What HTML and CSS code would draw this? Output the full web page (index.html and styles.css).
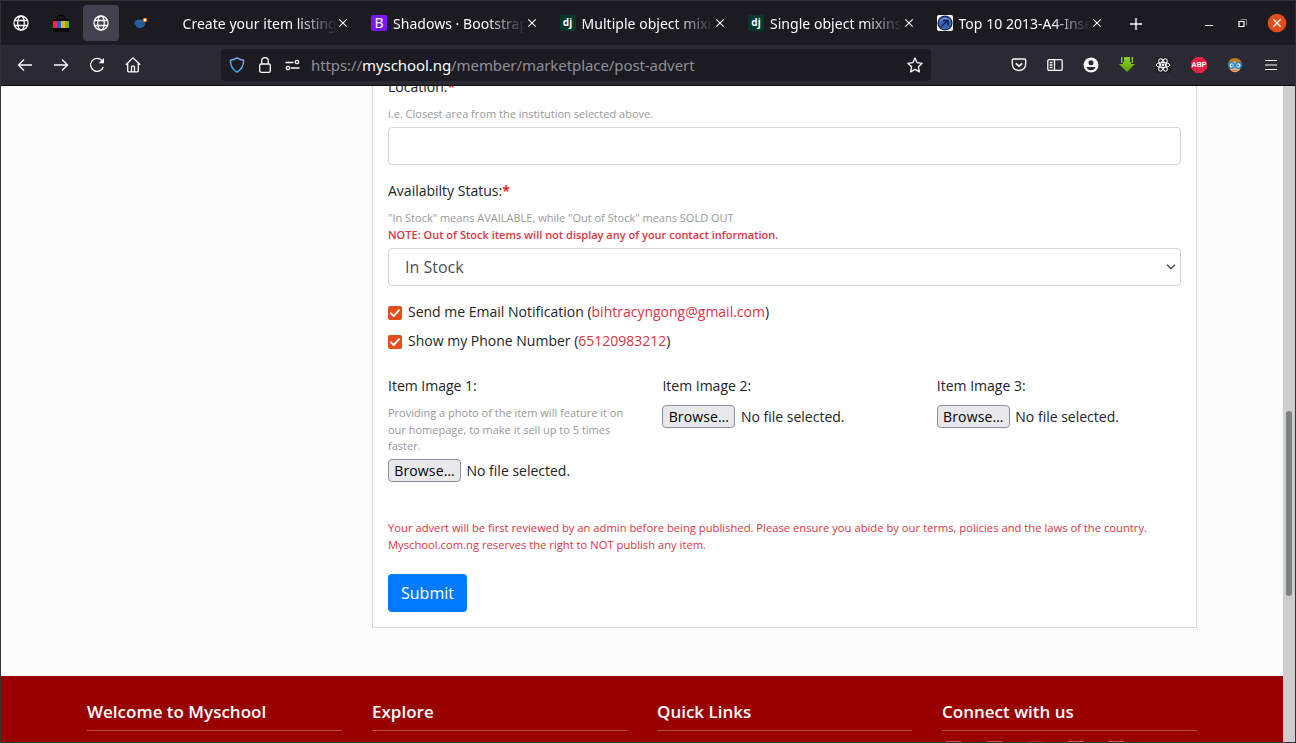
FILE: index.html
```html
<!DOCTYPE html>
<html lang="en">
<head>
<meta charset="utf-8">
<title>Create your item listing</title>
<link rel="stylesheet" href="styles.css">
</head>
<body>
<svg class="defs" width="0" height="0">
  <defs>
    <symbol id="globe" viewBox="0 0 16 16"><g fill="none" stroke="#fbfbfe" stroke-width="1.3"><circle cx="8" cy="8" r="7"/><ellipse cx="8" cy="8" rx="3.3" ry="7"/><path d="M1.5 5.5h13M1.5 10.5h13"/></g></symbol>
    <symbol id="close" viewBox="0 0 10 10"><path d="M1.3 1.3l7.4 7.4M8.7 1.3L1.3 8.7" fill="none" stroke="#fbfbfe" stroke-width="1.1"/></symbol>
    <symbol id="check" viewBox="0 0 14 14"><path d="M3 7.3l2.7 2.8L11 4.2" fill="none" stroke="#fff" stroke-width="1.9" stroke-linecap="round" stroke-linejoin="round"/></symbol>
  </defs>
</svg>
<div class="window">
  <header class="tabbar">
    <div class="pinned"><svg width="16" height="16"><use href="#globe"/></svg></div>
    <div class="pinned"><svg width="16" height="18" viewBox="0 0 16 18"><path d="M4.5 6V4.5Q4.5 1.5 8 1.5t3.500 3V6" fill="none" stroke="#000" stroke-width="1.3"/><path d="M0 5h16v13H0z"/><path d="M0 7h4v7H0z" fill="#ff2342"/><path d="M4 7h4v7H4z" fill="#0968d8"/><path d="M8 7h4v7H8z" fill="#ffae00"/><path d="M12 7h4v7h-4z" fill="#78b51a"/></svg></div>
    <div class="pinned active"><svg width="16" height="16"><use href="#globe"/></svg></div>
    <div class="pinned"><svg width="14" height="12" viewBox="0 0 14 12"><path d="M1 4q4-3 9 0l1 3q-1 4-5 4-4 0-4-3L.5 7z" fill="#2465a8"/><path d="M2 5.500q4 1.500 8 0M3 8q4 1 7-1" fill="none" stroke="#184c85" stroke-width=".8"/><circle cx="11" cy="3" r="1.700" fill="#fff" stroke="#f07b1d" stroke-width="1.100"/></svg></div>
    <div class="tabs">
      <div class="tab"><span class="tab-title">Create your item listing</span><svg class="x" width="10" height="10"><use href="#close"/></svg></div>
      <div class="tab"><span class="fav bs">B</span><span class="tab-title">Shadows · Bootstrap</span><svg class="x" width="10" height="10"><use href="#close"/></svg></div>
      <div class="tab"><span class="fav dj">dj</span><span class="tab-title">Multiple object mixins</span><svg class="x" width="10" height="10"><use href="#close"/></svg></div>
      <div class="tab"><span class="fav dj">dj</span><span class="tab-title">Single object mixins</span><svg class="x" width="10" height="10"><use href="#close"/></svg></div>
      <div class="tab"><svg class="fav" width="16" height="16" viewBox="0 0 16 16"><path d="M0 0h16v16H0z" fill="#fff"/><circle cx="8" cy="8" r="7.600" fill="#182746"/><circle cx="8" cy="8" r="6.300" fill="#3c62b8"/><path d="M3 6q5-5 10 0" fill="none" stroke="#91aceb"/><path d="M4 12l6-6M6 5.500h5v5" fill="none" stroke="#13254f" stroke-width="1.600"/></svg><span class="tab-title">Top 10 2013-A4-Insecure</span><svg class="x" width="10" height="10"><use href="#close"/></svg></div>
    </div>
    <svg class="plus" width="12" height="12" viewBox="0 0 12 12"><path d="M6 0v12M0 6h12" stroke="#fbfbfe" stroke-width="1.400"/></svg>
    <div class="controls">
      <svg width="8" height="8" viewBox="0 0 8 8"><path d="M0 6.500h8" stroke="#fff"/></svg>
      <svg width="9" height="9" viewBox="0 0 9 9"><path d="M2.500.5h6v6" fill="none" stroke="#85848a"/><path d="M1 2.500h5v5H1z" fill="none" stroke="#fff" stroke-width="1.200"/></svg>
      <svg width="20" height="20" viewBox="0 0 20 20"><circle cx="10" cy="10" r="9.300" fill="#e24d1a"/><path d="M6.300 6.300l7.400 7.400M13.700 6.300l-7.400 7.400" stroke="#fff" stroke-width="1.300"/></svg>
    </div>
  </header>
  <nav class="toolbar">
    <div class="navbtns">
      <svg width="16" height="16" viewBox="0 0 16 16"><path d="M15 8H1.500M7 2.500L1.500 8 7 13.500"/></svg>
      <svg width="16" height="16" viewBox="0 0 16 16"><path d="M1 8h13.500M9 2.500L14.500 8 9 13.500"/></svg>
      <svg width="16" height="16" viewBox="0 0 16 16"><path d="M13 3.600A6.500 6.500 0 1 0 14.300 10"/><path d="M15 .9v5.300H9.700z" fill="#fbfbfe" stroke="none"/></svg>
      <svg width="16" height="16" viewBox="0 0 16 16"><path d="M.8 7.800L8 .9l7.200 6.900M2.700 6.500v7.300q0 1 1 1h8.600q1 0 1-1V6.500M6.500 14.500V10q0-.8.800-.8h1.400q.8 0 .8.800v4.500"/></svg>
    </div>
    <div class="urlbar">
      <svg width="16" height="16" viewBox="0 0 16 16"><defs><linearGradient id="sh" x1="0" y1="1" x2="1" y2="0"><stop offset="0" stop-color="#22a7ff"/><stop offset=".45" stop-color="#54b9ef"/><stop offset="1" stop-color="#a68bea"/></linearGradient></defs><path d="M8 .8Q11 2.800 14.600 3.200 14.700 11 8 15.200 1.300 11 1.400 3.200 5 2.800 8 .8z" fill="none" stroke="url(#sh)" stroke-width="1.400"/></svg>
      <svg width="12" height="16" viewBox="0 0 12 16"><rect x=".7" y="7" width="10.600" height="8.300" rx="1.600"/><path d="M2.700 7V4a3.300 3.300 0 0 1 6.600 0v3"/></svg>
      <svg width="15" height="12" viewBox="0 0 15 12"><path d="M.5 3.500h8M6 9h8.500"/><circle cx="12" cy="3" r="1.700"/><circle cx="3" cy="9" r="1.700"/></svg>
      <span class="url">https://<b>myschool.ng</b>/member/marketplace/post-advert</span>
      <svg class="star" width="16" height="16" viewBox="0 0 16 16"><path d="M8 1l2.100 4.700 5 .6-3.700 3.500 1 5.100L8 12.400l-4.400 2.500 1-5.100L.9 6.300l5-.6z" stroke-linejoin="round"/></svg>
    </div>
    <div class="extensions">
      <svg width="16" height="16" viewBox="0 0 16 16"><path d="M2.600 2h10.800q1.300 0 1.300 1.300v3.200q0 6.500-6.700 7-6.700-.5-6.700-7V3.300Q1.300 2 2.600 2z"/><path d="M4.800 6.300L8 9.200l3.200-2.900" stroke-width="1.600"/></svg>
      <svg width="16" height="14" viewBox="0 0 16 14"><rect x=".8" y="1.600" width="14.400" height="10.800" rx="1.300"/><path d="M7.500 2v10M2.700 4.500h2.800M2.700 7h2.800M2.700 9.500h2.800"/></svg>
      <svg width="16" height="16" viewBox="0 0 16 16"><circle cx="8" cy="8" r="7.500" fill="#fbfbfe" stroke="none"/><circle cx="8" cy="5.800" r="2.500" fill="#2b2a33" stroke="none"/><path d="M3.500 10h9q-1.200 3.300-4.500 3.300T3.500 10z" fill="#2b2a33" stroke="none"/></svg>
      <svg width="16" height="18" viewBox="0 0 16 18"><defs><linearGradient id="dl" x1="0" y1="0" x2="0" y2="1"><stop offset="0" stop-color="#8fce24"/><stop offset="1" stop-color="#5fa30d"/></linearGradient></defs><path d="M2 1h1.500v6H2zM5 1h6v8H5zM12.500 1H14v6h-1.500zM0 8h4V6h8v2h4l-8 8z" fill="url(#dl)" stroke="none"/></svg>
      <svg width="16" height="16" viewBox="0 0 16 16"><path d="M0 0h16v16H0z" fill="#222126" stroke="none"/><g stroke-width="1"><ellipse cx="8" cy="8" rx="6.800" ry="2.600"/><ellipse cx="8" cy="8" rx="6.800" ry="2.600" transform="rotate(60 8 8)"/><ellipse cx="8" cy="8" rx="6.800" ry="2.600" transform="rotate(120 8 8)"/></g><circle cx="8" cy="8" r="1.400" fill="#fff" stroke="none"/></svg>
      <span class="abp">ABP</span>
      <svg width="16" height="16" viewBox="0 0 16 16"><circle cx="8" cy="9.500" r="5.800" fill="#f2b279" stroke="none"/><path d="M1 9Q1 1 8 1t7 8l-1.500-3Q9 6 7 4 6 6 2.500 6z" fill="#b97820" stroke="none"/><g stroke-width="1.300"><circle cx="4.600" cy="8.500" r="2.800" fill="#e6f6ff" stroke="#1882cc"/><circle cx="11.400" cy="8.500" r="2.800" fill="#e6f6ff" stroke="#1882cc"/></g><circle cx="5" cy="8.500" r=".9" fill="#164e7d" stroke="none"/><circle cx="11" cy="8.500" r=".9" fill="#164e7d" stroke="none"/><path d="M6 13.500h4" stroke="#a35a32" stroke-width=".8"/></svg>
      <svg width="12" height="12" viewBox="0 0 12 12"><path d="M0 1.500h12M0 6h12M0 10.500h12" stroke-width="1.200"/></svg>
    </div>
  </nav>
  <div class="viewport">
    <div class="page">
      <main class="card">
        <div class="label">Location:<span class="req">*</span></div>
        <p class="hint">i.e. Closest area from the institution selected above.</p>
        <div class="field"></div>
        <div class="label">Availabilty Status:<span class="req">*</span></div>
        <p class="hint status-hint">"In Stock" means AVAILABLE, while "Out of Stock" means SOLD OUT<br><strong>NOTE: Out of Stock items will not display any of your contact information.</strong></p>
        <div class="field select"><span>In Stock</span><svg width="10" height="6" viewBox="0 0 10 6"><path d="M1 .8l4 4 4-4" fill="none" stroke="#495057" stroke-width="1.500"/></svg></div>
        <div class="checks">
          <div class="check"><span class="box"><svg width="14" height="14"><use href="#check"/></svg></span><span>Send me Email Notification (<em>bihtracyngong@gmail.com</em>)</span></div>
          <div class="check"><span class="box"><svg width="14" height="14"><use href="#check"/></svg></span><span>Show my Phone Number (<em>65120983212</em>)</span></div>
        </div>
        <div class="images">
          <div><div class="label">Item Image 1:</div><p class="hint">Providing a photo of the item will feature it on our homepage, to make it sell up to 5 times faster.</p><div class="file"><button>Browse…</button><span>No file selected.</span></div></div>
          <div><div class="label">Item Image 2:</div><div class="file"><button>Browse…</button><span>No file selected.</span></div></div>
          <div><div class="label">Item Image 3:</div><div class="file"><button>Browse…</button><span>No file selected.</span></div></div>
        </div>
        <p class="notice">Your advert will be first reviewed by an admin before being published. Please ensure you abide by our terms, policies and the laws of the country.<br>Myschool.com.ng reserves the right to NOT publish any item.</p>
        <button class="submit">Submit</button>
      </main>
      <footer class="footer">
        <section><h2>Welcome to Myschool</h2></section>
        <section><h2>Explore</h2></section>
        <section><h2>Quick Links</h2></section>
        <section><h2>Connect with us</h2><div class="social"><i></i><i></i><i class="faint"></i><i></i><i></i></div></section>
      </footer>
    </div>
    <div class="scrollbar"><div class="thumb"></div></div>
  </div>
</div>
</body>
</html>
```
FILE: styles.css
```css
* { box-sizing: border-box; }
body { margin: 0; overflow: hidden; font-family: "Open Sans", sans-serif; color: #212529; }
p, h2 { margin: 0; }
svg { display: block; flex: none; }
.defs { position: absolute; }
.window { width: 1296px; height: 743px; border: 1px solid #333336; display: flex; flex-direction: column; overflow: hidden; }

.tabbar { height: 44px; flex: none; background: #1c1b22; display: flex; align-items: center; padding-left: 2px; color: #fbfbfe; }
.pinned { width: 36px; height: 36px; margin-right: 4px; border-radius: 4px; display: flex; align-items: center; justify-content: center; flex: none; }
.active { background: #42414d; }
.tabs { display: flex; margin-left: 8.500px; }
.tab { width: 188.500px; height: 36px; padding: 0 13px 0 11px; display: flex; align-items: center; flex: none; }
.fav { width: 16px; height: 16px; margin-right: 6px; border-radius: 2px; flex: none; text-align: center; }
.bs { background: #7a18f5; font: 14px/16px "Noto Sans", sans-serif; }
.dj { background: #07382a; font: bold 10px/14px "Noto Sans", sans-serif; }
.tab-title { flex: 1; min-width: 0; overflow: hidden; white-space: nowrap; font: 14px/20px "Noto Sans", sans-serif; letter-spacing: 0.03px; padding-top: 1px; mask-image: linear-gradient(to left, transparent, #000 40px); }
.tab .x { margin-left: 1px; margin-right: -1px; }
.plus { margin-left: 15.500px; margin-top: 1px; }
.controls { margin-left: auto; margin-right: 8px; display: flex; align-items: center; gap: 25px; }
.controls svg:last-child { margin-left: -5px; }

.toolbar { height: 41px; flex: none; background: #2b2a33; border-bottom: 1px solid #0c0c0d; display: flex; align-items: center; }
.toolbar svg { fill: none; stroke: #fbfbfe; stroke-width: 1.300; }
.navbtns { display: flex; gap: 20px; margin-left: 16px; width: 204px; }
.urlbar { width: 710px; height: 32px; background: #1c1b22; border-radius: 4px; display: flex; align-items: center; padding: 0 8px; gap: 14px; }
.url { font: 15px/20px "Noto Sans", sans-serif; letter-spacing: -0.08px; color: #8f8f98; margin-left: -3px; white-space: nowrap; }
.url b { font-weight: 400; color: #fbfbfe; }
.star { margin-left: auto; }
.extensions { display: flex; align-items: center; gap: 20px; margin-left: 80px; }
.extensions svg:last-child { margin-left: 2px; }
.abp { width: 16px; height: 16px; background: #ed1e45; color: #fff; font: bold 7px/16px "Liberation Sans", sans-serif; text-align: center; clip-path: polygon(30% 0, 70% 0, 100% 30%, 100% 70%, 70% 100%, 30% 100%, 0 70%, 0 30%); }

.viewport { flex: 1; min-height: 0; display: flex; overflow: hidden; }
.page { width: 1282px; background: #fcfcfc; overflow: hidden; }
.card { width: 825px; height: 552px; margin: -10px 0 48px 371px; background: #fff; border: solid #dadada; border-width: 0 1px 1px; padding: 0 15px; }
.label { font-size: 14px; line-height: 21px; height: 30px; }
.req { color: #f00; font-weight: 600; }
.hint { font-size: 11px; line-height: 16.500px; color: #999; margin-bottom: 4.500px; }
.status-hint { line-height: 17px; margin-top: -1px; margin-bottom: 5px; }
.hint strong { color: #dc3545; font-weight: 600; }
.field { height: 38px; border: 1px solid #ced4da; border-radius: 4px; margin-bottom: 15px; background: #fff; }
.select { display: flex; align-items: center; justify-content: space-between; padding: 0 4px 0 16px; font-size: 16px; color: #495057; margin-bottom: 0; }
.checks { padding-top: 11px; }
.check { display: flex; align-items: center; gap: 6px; font-size: 14px; line-height: 29px; height: 29px; }
.check em { font-style: normal; color: #dc3545; }
.box { width: 14px; height: 14px; border-radius: 2px; background: #e24d1a; margin-top: 3px; }
.images { display: grid; grid-template-columns: repeat(3, 274.400px); height: 137px; margin-top: 20px; }
.images > div { padding-right: 30px; }
.images .hint { margin-bottom: 4.500px; }
.file { display: flex; align-items: center; font-size: 14px; height: 23px; gap: 5.500px; white-space: nowrap; }
.file button { width: 73px; height: 23px; border: 1px solid #8f8f9d; border-radius: 4px; background: #e9e9ed; padding: 0; font: 500 14px/21px "Open Sans", sans-serif; letter-spacing: 0.15px; color: #000; }
.notice { font-size: 11.230px; line-height: 17px; color: #dc3545; margin: 7px 0 21px; white-space: nowrap; }
.submit { display: block; width: 79px; height: 38px; border: 0; border-radius: 4px; background: #007bff; color: #fff; font: 16px/24px "Open Sans", sans-serif; }
.footer { height: 90px; background: #900; display: grid; grid-template-columns: repeat(4, 255px); gap: 30px; padding: 24px 0 0 86px; color: #fff; }
.footer h2 { font-size: 17px; line-height: 24px; height: 31px; font-weight: 600; border-bottom: 1px solid #b84d4d; }
.social { display: flex; gap: 23.800px; padding: 10px 3px; }
.social i { width: 17px; height: 8px; border-radius: 2px 2px 0 0; background: #bd5555; }
.social .faint { background: #a52323; }
.scrollbar { width: 12px; background: #cdcdcd; padding: 325px 3px 0; }
.thumb { width: 6px; height: 185px; border-radius: 3px; background: #7d8180; }
```
